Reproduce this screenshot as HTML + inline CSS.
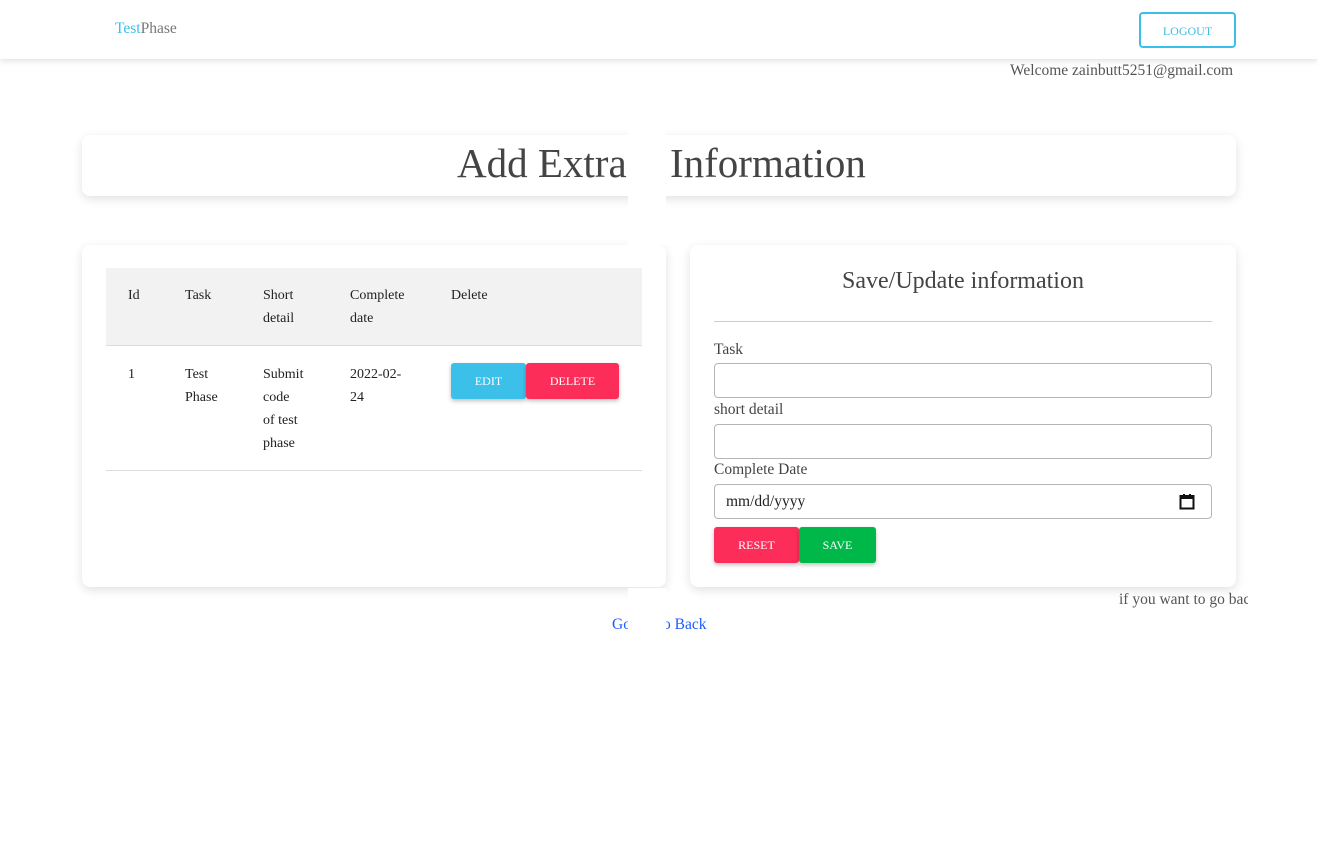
<!DOCTYPE html>
<html><head><meta charset="utf-8"><style>
*{box-sizing:border-box;margin:0;padding:0}
body{width:1318px;height:856px;background:#fff;font-family:"Liberation Serif",serif;position:relative;overflow:hidden;color:#333}
.abs{position:absolute}
.nav{left:0;top:0;width:1318px;height:59px;background:#fff;box-shadow:0 2px 6px rgba(0,0,0,.12);z-index:2}
.card{background:#fff;border-radius:8px;box-shadow:0 3px 10px rgba(0,0,0,.12)}
.btn{position:absolute;color:#fff;font-size:12px;text-align:center;border-radius:3px;box-shadow:0 2px 4px rgba(0,0,0,.25)}
.inp{position:absolute;left:714px;width:498px;height:35px;border:1px solid #b5b5b5;border-radius:4px;background:#fff}
.lbl{position:absolute;left:714px;font-size:15.5px;color:#444}
.t{position:absolute;font-size:14px;color:#222;line-height:23px}
</style></head><body>
<div class="abs nav">
  <div class="abs" style="left:115px;top:20px;font-size:15.5px;color:#777"><span style="color:#3bbfea">Test</span>Phase</div>
  <div class="abs" style="left:1139px;top:12px;width:97px;height:36px;border:2px solid #3bbfea;border-radius:4px;color:#3bbfea;font-size:12px;text-align:center;line-height:34px">LOGOUT</div>
</div>
<div class="abs" style="left:1010px;top:62px;font-size:15.5px;color:#555;width:226px;overflow:hidden;white-space:nowrap">Welcome zainbutt5251@gmail.com</div>

<div class="abs card" style="left:82px;top:135px;width:1154px;height:61px"></div>
<div class="abs" style="left:457px;top:139px;font-size:41px;color:#444;white-space:nowrap">Add Extra</div>
<div class="abs" style="left:670px;top:139px;font-size:41px;color:#444;white-space:nowrap">Information</div>

<div class="abs card" style="left:82px;top:245px;width:584px;height:342px"></div>
<div class="abs" style="left:106px;top:268px;width:536px;height:78px;background:#f2f2f2;border-bottom:1px solid #ddd"></div>
<div class="abs" style="left:106px;top:470px;width:536px;height:1px;background:#ddd"></div>
<div class="t" style="left:128px;top:284px">Id</div>
<div class="t" style="left:185px;top:284px">Task</div>
<div class="t" style="left:263px;top:284px">Short<br>detail</div>
<div class="t" style="left:350px;top:284px">Complete<br>date</div>
<div class="t" style="left:451px;top:284px">Delete</div>
<div class="t" style="left:128px;top:363px">1</div>
<div class="t" style="left:185px;top:363px">Test<br>Phase</div>
<div class="t" style="left:263px;top:363px">Submit<br>code<br>of test<br>phase</div>
<div class="t" style="left:350px;top:363px">2022-02-<br>24</div>
<div class="btn" style="left:451px;top:363px;width:75px;height:36px;line-height:37px;background:#3bc0ea">EDIT</div>
<div class="btn" style="left:526px;top:363px;width:93px;height:36px;line-height:37px;background:#fd2d59">DELETE</div>

<div class="abs card" style="left:690px;top:245px;width:546px;height:342px"></div>
<div class="abs" style="left:690px;top:268px;width:546px;text-align:center;font-size:24px;color:#444">Save/Update information</div>
<div class="abs" style="left:714px;top:321px;width:498px;height:1px;background:#ccc"></div>
<div class="lbl" style="top:341px">Task</div>
<div class="inp" style="top:363px"></div>
<div class="lbl" style="top:401px">short detail</div>
<div class="inp" style="top:424px"></div>
<div class="lbl" style="top:461px">Complete Date</div>
<div class="inp" style="top:484px"><span class="abs" style="left:11px;top:8px;font-size:15.5px;color:#222">mm/dd/yyyy</span>
<svg class="abs" style="left:464px;top:8px" width="16" height="17" viewBox="0 0 16 17"><rect x="1.5" y="3" width="13" height="12.5" fill="none" stroke="#111" stroke-width="2"/><rect x="1.5" y="3" width="13" height="3" fill="#111"/><rect x="4" y="1" width="2" height="3" fill="#111"/><rect x="10" y="1" width="2" height="3" fill="#111"/></svg></div>
<div class="btn" style="left:714px;top:527px;width:85px;height:36px;line-height:37px;background:#fd2d59">RESET</div>
<div class="btn" style="left:799px;top:527px;width:77px;height:36px;line-height:37px;background:#00b74a">SAVE</div>

<div class="abs" style="left:1119px;top:591px;font-size:15.5px;color:#555;width:129px;overflow:hidden;white-space:nowrap">if you want to go back</div>
<div class="abs" style="left:612px;top:616px;font-size:15.5px;color:#1a5cff;white-space:nowrap">Go t</div>
<div class="abs" style="left:663px;top:616px;font-size:15.5px;color:#1a5cff;white-space:nowrap">o Back</div>

<div class="abs" style="left:628px;top:59px;width:38px;height:186px;background:#fff;z-index:1"></div>
<div class="abs" style="left:628px;top:588px;width:38px;height:52px;background:#fff;z-index:1"></div>
</body></html>
